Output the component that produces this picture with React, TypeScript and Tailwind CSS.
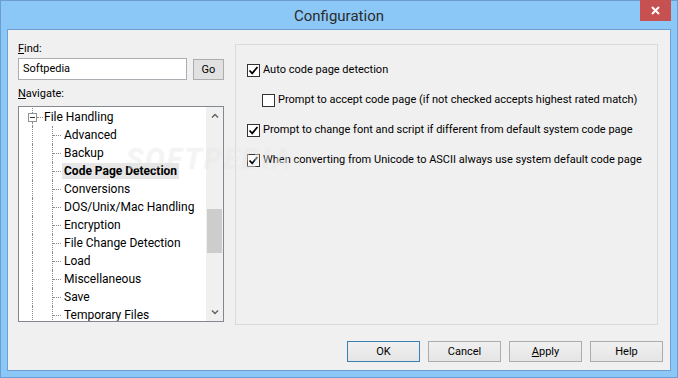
import React from "react";

const children = [
  "Advanced",
  "Backup",
  "Code Page Detection",
  "Conversions",
  "DOS/Unix/Mac Handling",
  "Encryption",
  "File Change Detection",
  "Load",
  "Miscellaneous",
  "Save",
  "Temporary Files",
];

const Check = () => (
  <svg width="11" height="11" viewBox="0 0 11 11">
    <path d="M1.5 5.5 L4.2 8.3 L9.5 2" fill="none" stroke="#000" strokeWidth="1.8" />
  </svg>
);

const CheckRow: React.FC<{ checked: boolean; indent?: boolean; label: string }> = ({
  checked,
  indent,
  label,
}) => (
  <div className={`flex items-center h-[16px] gap-[3px] whitespace-nowrap ${indent ? "pl-[15px]" : ""}`}>
    <div className="w-[13px] h-[13px] shrink-0 border border-[#333] bg-white flex items-center justify-center">
      {checked && <Check />}
    </div>
    <span>{label}</span>
  </div>
);

const Button: React.FC<{ children: React.ReactNode; primary?: boolean }> = ({
  children,
  primary,
}) => (
  <div
    className={`w-[73px] h-[21px] flex items-center justify-center border bg-gradient-to-b from-[#f0f0f0] to-[#e5e5e5] ${
      primary ? "border-[#3c7fb1]" : "border-[#acacac]"
    }`}
  >
    {children}
  </div>
);

export default function App() {
  return (
    <div className="w-[678px] h-[378px] bg-[#8bc8f8] border border-[#6d9cd0] flex flex-col font-['Roboto','Noto_Sans',sans-serif] text-[11px] leading-[16px] text-black">
      {/* title bar */}
      <div className="h-[28px] relative flex items-center justify-center">
        <span className="text-[15px] text-[#2b2b2b] pt-[1px]">Configuration</span>
        <div className="absolute top-[-1px] right-[6px] w-[31px] h-[21px] bg-[#c75050] flex items-center justify-center">
          <svg width="9" height="9" viewBox="0 0 9 9">
            <path d="M1 1 L8 8 M8 1 L1 8" stroke="#fff" strokeWidth="2" />
          </svg>
        </div>
      </div>

      {/* client */}
      <div className="mx-[6px] h-[342px] border border-[#6f9fd2] bg-[#f0f0f0] flex flex-col relative">
        <div className="h-[295px] flex items-start">
          {/* left column */}
          <div className="pl-[10px] pt-[11px] w-[216px]">
            <div>
              <span className="underline">F</span>ind:
            </div>
            <div className="mt-[1px] flex items-start gap-[6px]">
              <div className="w-[169px] h-[22px] border border-[#abadb3] bg-white pl-[4px] flex items-center">
                Softpedia
              </div>
              <div className="mt-[1px] w-[31px] h-[21px] border border-[#adadad] bg-[#e1e1e1] flex items-center justify-center">
                Go
              </div>
            </div>
            <div className="mt-[6px]">
              <span className="underline">N</span>avigate:
            </div>
            <div className="mt-[4px] w-[206px] h-[216px] border border-[#828790] bg-white flex text-[12px]">
              <div className="flex-1 overflow-hidden pt-[1px]">
                {/* root */}
                <div className="h-[18px] flex items-stretch">
                  <div className="w-[9px]" />
                  <div className="w-[9px] flex flex-col items-center">
                    <div className="flex-1 w-0 border-l border-dotted border-[#8a8a8a]" />
                    <div className="w-[9px] h-[9px] border border-[#919191] bg-white flex items-center justify-center">
                      <div className="w-[5px] h-[1px] bg-[#333]" />
                    </div>
                    <div className="flex-1 w-0 border-l border-dotted border-[#8a8a8a]" />
                  </div>
                  <div className="w-[7px] flex items-center">
                    <div className="w-[6px] border-t border-dotted border-[#8a8a8a]" />
                  </div>
                  <div className="flex items-center whitespace-nowrap">File Handling</div>
                </div>
                {children.map((c) => {
                  const sel = c === "Code Page Detection";
                  return (
                    <div key={c} className="h-[18px] flex items-stretch">
                      <div className="w-[13px]" />
                      <div className="w-[20px] border-l border-dotted border-[#8a8a8a]" />
                      <div className="w-[10px] border-l border-dotted border-[#8a8a8a] flex items-center">
                        <div className="w-[8px] border-t border-dotted border-[#8a8a8a]" />
                      </div>
                      <div className="flex items-center whitespace-nowrap">
                        <span
                          className={`px-[2px] h-[16px] flex items-center ${
                            sel ? "bg-[#e6e6e6] font-bold" : ""
                          }`}
                        >
                          {c}
                        </span>
                      </div>
                    </div>
                  );
                })}
              </div>
              {/* scrollbar */}
              <div className="w-[17px] bg-[#f0f0f0] flex flex-col">
                <div className="h-[17px] flex items-center justify-center">
                  <svg width="8" height="5" viewBox="0 0 8 5">
                    <path d="M1 4.5 L4 1.5 L7 4.5" fill="none" stroke="#606060" strokeWidth="1.4" />
                  </svg>
                </div>
                <div className="flex-1 pt-[85px] px-[1px]">
                  <div className="h-[44px] bg-[#cdcdcd]" />
                </div>
                <div className="h-[17px] flex items-center justify-center">
                  <svg width="8" height="5" viewBox="0 0 8 5">
                    <path d="M1 0.5 L4 3.5 L7 0.5" fill="none" stroke="#606060" strokeWidth="1.4" />
                  </svg>
                </div>
              </div>
            </div>
          </div>

          {/* right panel */}
          <div className="ml-[11px] mt-[14px] w-[423px] h-[281px] border border-[#dadada] pl-[11px] pt-[17px] flex flex-col gap-[14px]">
            <CheckRow checked label="Auto code page detection" />
            <CheckRow
              checked={false}
              indent
              label="Prompt to accept code page (if not checked accepts highest rated match)"
            />
            <CheckRow
              checked
              label="Prompt to change font and script if different from default system code page"
            />
            <CheckRow
              checked
              label="When converting from Unicode to ASCII always use system default code page"
            />
          </div>
        </div>

        {/* buttons */}
        <div className="mt-[16px] flex justify-end gap-[8px] pr-[7px]">
          <Button primary>OK</Button>
          <Button>Cancel</Button>
          <Button>
            <span>
              <span className="underline">A</span>pply
            </span>
          </Button>
          <Button>Help</Button>
        </div>

        {/* watermark */}
        <div className="absolute left-[118px] top-[115px] text-[29px] leading-[28px] font-bold italic tracking-[2px] text-white/45 [text-shadow:0_0_1px_rgba(0,0,0,0.08)] pointer-events-none">
          SOFTPEDIA<sup className="text-[8px] not-italic">®</sup>
        </div>
      </div>
    </div>
  );
}
